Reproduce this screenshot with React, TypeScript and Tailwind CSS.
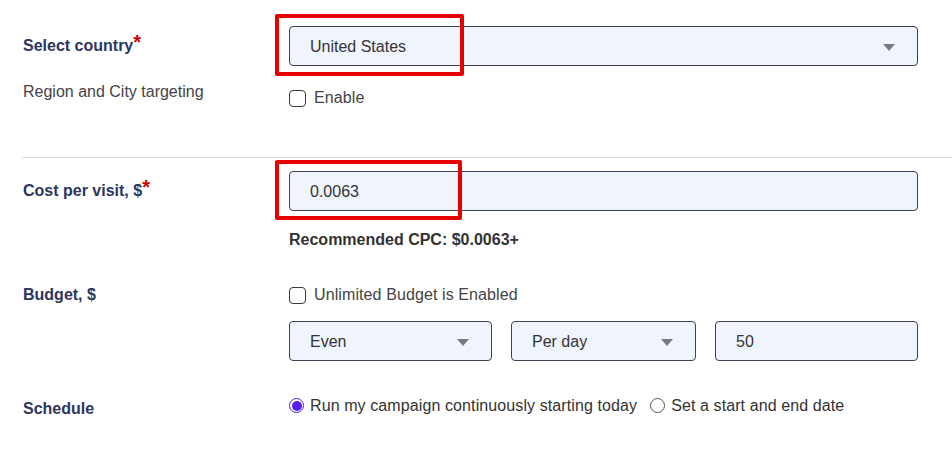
import React from "react";

const Caret = () => (
  <svg width="12" height="7" viewBox="0 0 12 7" className="shrink-0">
    <path d="M0 0 H12 L6 7 Z" fill="#7a7a7a" />
  </svg>
);

const Box = ({ className, children }: { className?: string; children?: React.ReactNode }) => (
  <div
    className={
      "h-[40px] flex items-center justify-between pl-[20px] pr-[22px] pt-[2px] bg-[#f0f5fd] border border-[#3c4154] rounded-[4px] text-[16px] text-[#333] " +
      (className || "")
    }
  >
    {children}
  </div>
);

const Check = () => (
  <span className="inline-block w-[17px] h-[17px] rounded-[4px] border border-[#3a3a3a] bg-white shrink-0" />
);

const Label = ({ children, req }: { children: React.ReactNode; req?: boolean }) => (
  <div className="w-[289px] pl-[23px] shrink-0 text-[16px] font-bold text-[#2d3561] leading-[20px]">
    {children}
    {req && <span className="text-[#d00000] text-[20px] align-top relative -top-[4px]">*</span>}
  </div>
);

export default function App() {
  return (
    <div
      className="relative w-[952px] h-[451px] bg-white overflow-hidden text-[#333]"
      style={{ fontFamily: '"Liberation Sans", Arial, sans-serif' }}
    >
      <div className="flex flex-col pt-[26px]">
        {/* Select country */}
        <div className="flex items-center">
          <Label req>Select country</Label>
          <Box className="w-[629px]">
            <span>United States</span>
            <Caret />
          </Box>
        </div>

        {/* Region */}
        <div className="flex mt-[16px]">
          <div className="w-[289px] pl-[23px] shrink-0 text-[16px] text-[#444] leading-[20px]">
            Region and City targeting
          </div>
          <div className="flex items-center gap-[8px] pt-[6px] text-[16px] text-[#444] leading-[20px] tracking-[0.1px]">
            <Check />
            <span>Enable</span>
          </div>
        </div>

        <div className="ml-[22px] mt-[49px] h-px bg-[#dddddd]" />

        {/* Cost per visit */}
        <div className="flex items-center mt-[13px]">
          <Label req>Cost per visit, $</Label>
          <Box className="w-[629px]">
            <span>0.0063</span>
          </Box>
        </div>

        <div className="ml-[289px] mt-[19px] text-[16px] font-bold text-[#333] leading-[20px]">
          Recommended CPC: $0.0063+
        </div>

        {/* Budget */}
        <div className="flex items-center mt-[34px]">
          <Label>Budget, $</Label>
          <div className="flex items-center gap-[8px] text-[16px] text-[#444] leading-[20px] tracking-[0.1px] pt-[1px]">
            <Check />
            <span>Unlimited Budget is Enabled</span>
          </div>
        </div>

        <div className="flex ml-[289px] mt-[16px] gap-[19px]">
          <Box className="w-[203px]">
            <span>Even</span>
            <Caret />
          </Box>
          <Box className="w-[185px]">
            <span>Per day</span>
            <Caret />
          </Box>
          <Box className="w-[203px]">
            <span>50</span>
          </Box>
        </div>

        {/* Schedule */}
        <div className="flex mt-[31px]">
          <div className="w-[289px] pl-[23px] shrink-0 pt-[7px] text-[16px] font-bold text-[#2d3561] leading-[20px]">
            Schedule
          </div>
          <div className="flex items-center text-[16px] text-[#333] leading-[20px] tracking-[0.1px]">
            <span className="w-[15px] h-[15px] rounded-full border border-[#4b1fd6] bg-white flex items-center justify-center shrink-0">
              <span className="w-[10px] h-[10px] rounded-full bg-[#5a1ef0]" />
            </span>
            <span className="ml-[6px]">Run my campaign continuously starting today</span>
            <span className="ml-[13px] w-[15px] h-[15px] rounded-full border border-[#555] bg-white shrink-0" />
            <span className="ml-[6px]">Set a start and end date</span>
          </div>
        </div>
      </div>

      {/* red annotation boxes */}
      <div className="absolute left-[275px] top-[14px] w-[189px] h-[62px] border-[4px] border-[#e60000] rounded-[2px]" />
      <div className="absolute left-[275px] top-[160px] w-[187px] h-[60px] border-[4px] border-[#e60000] rounded-[2px]" />
    </div>
  );
}
